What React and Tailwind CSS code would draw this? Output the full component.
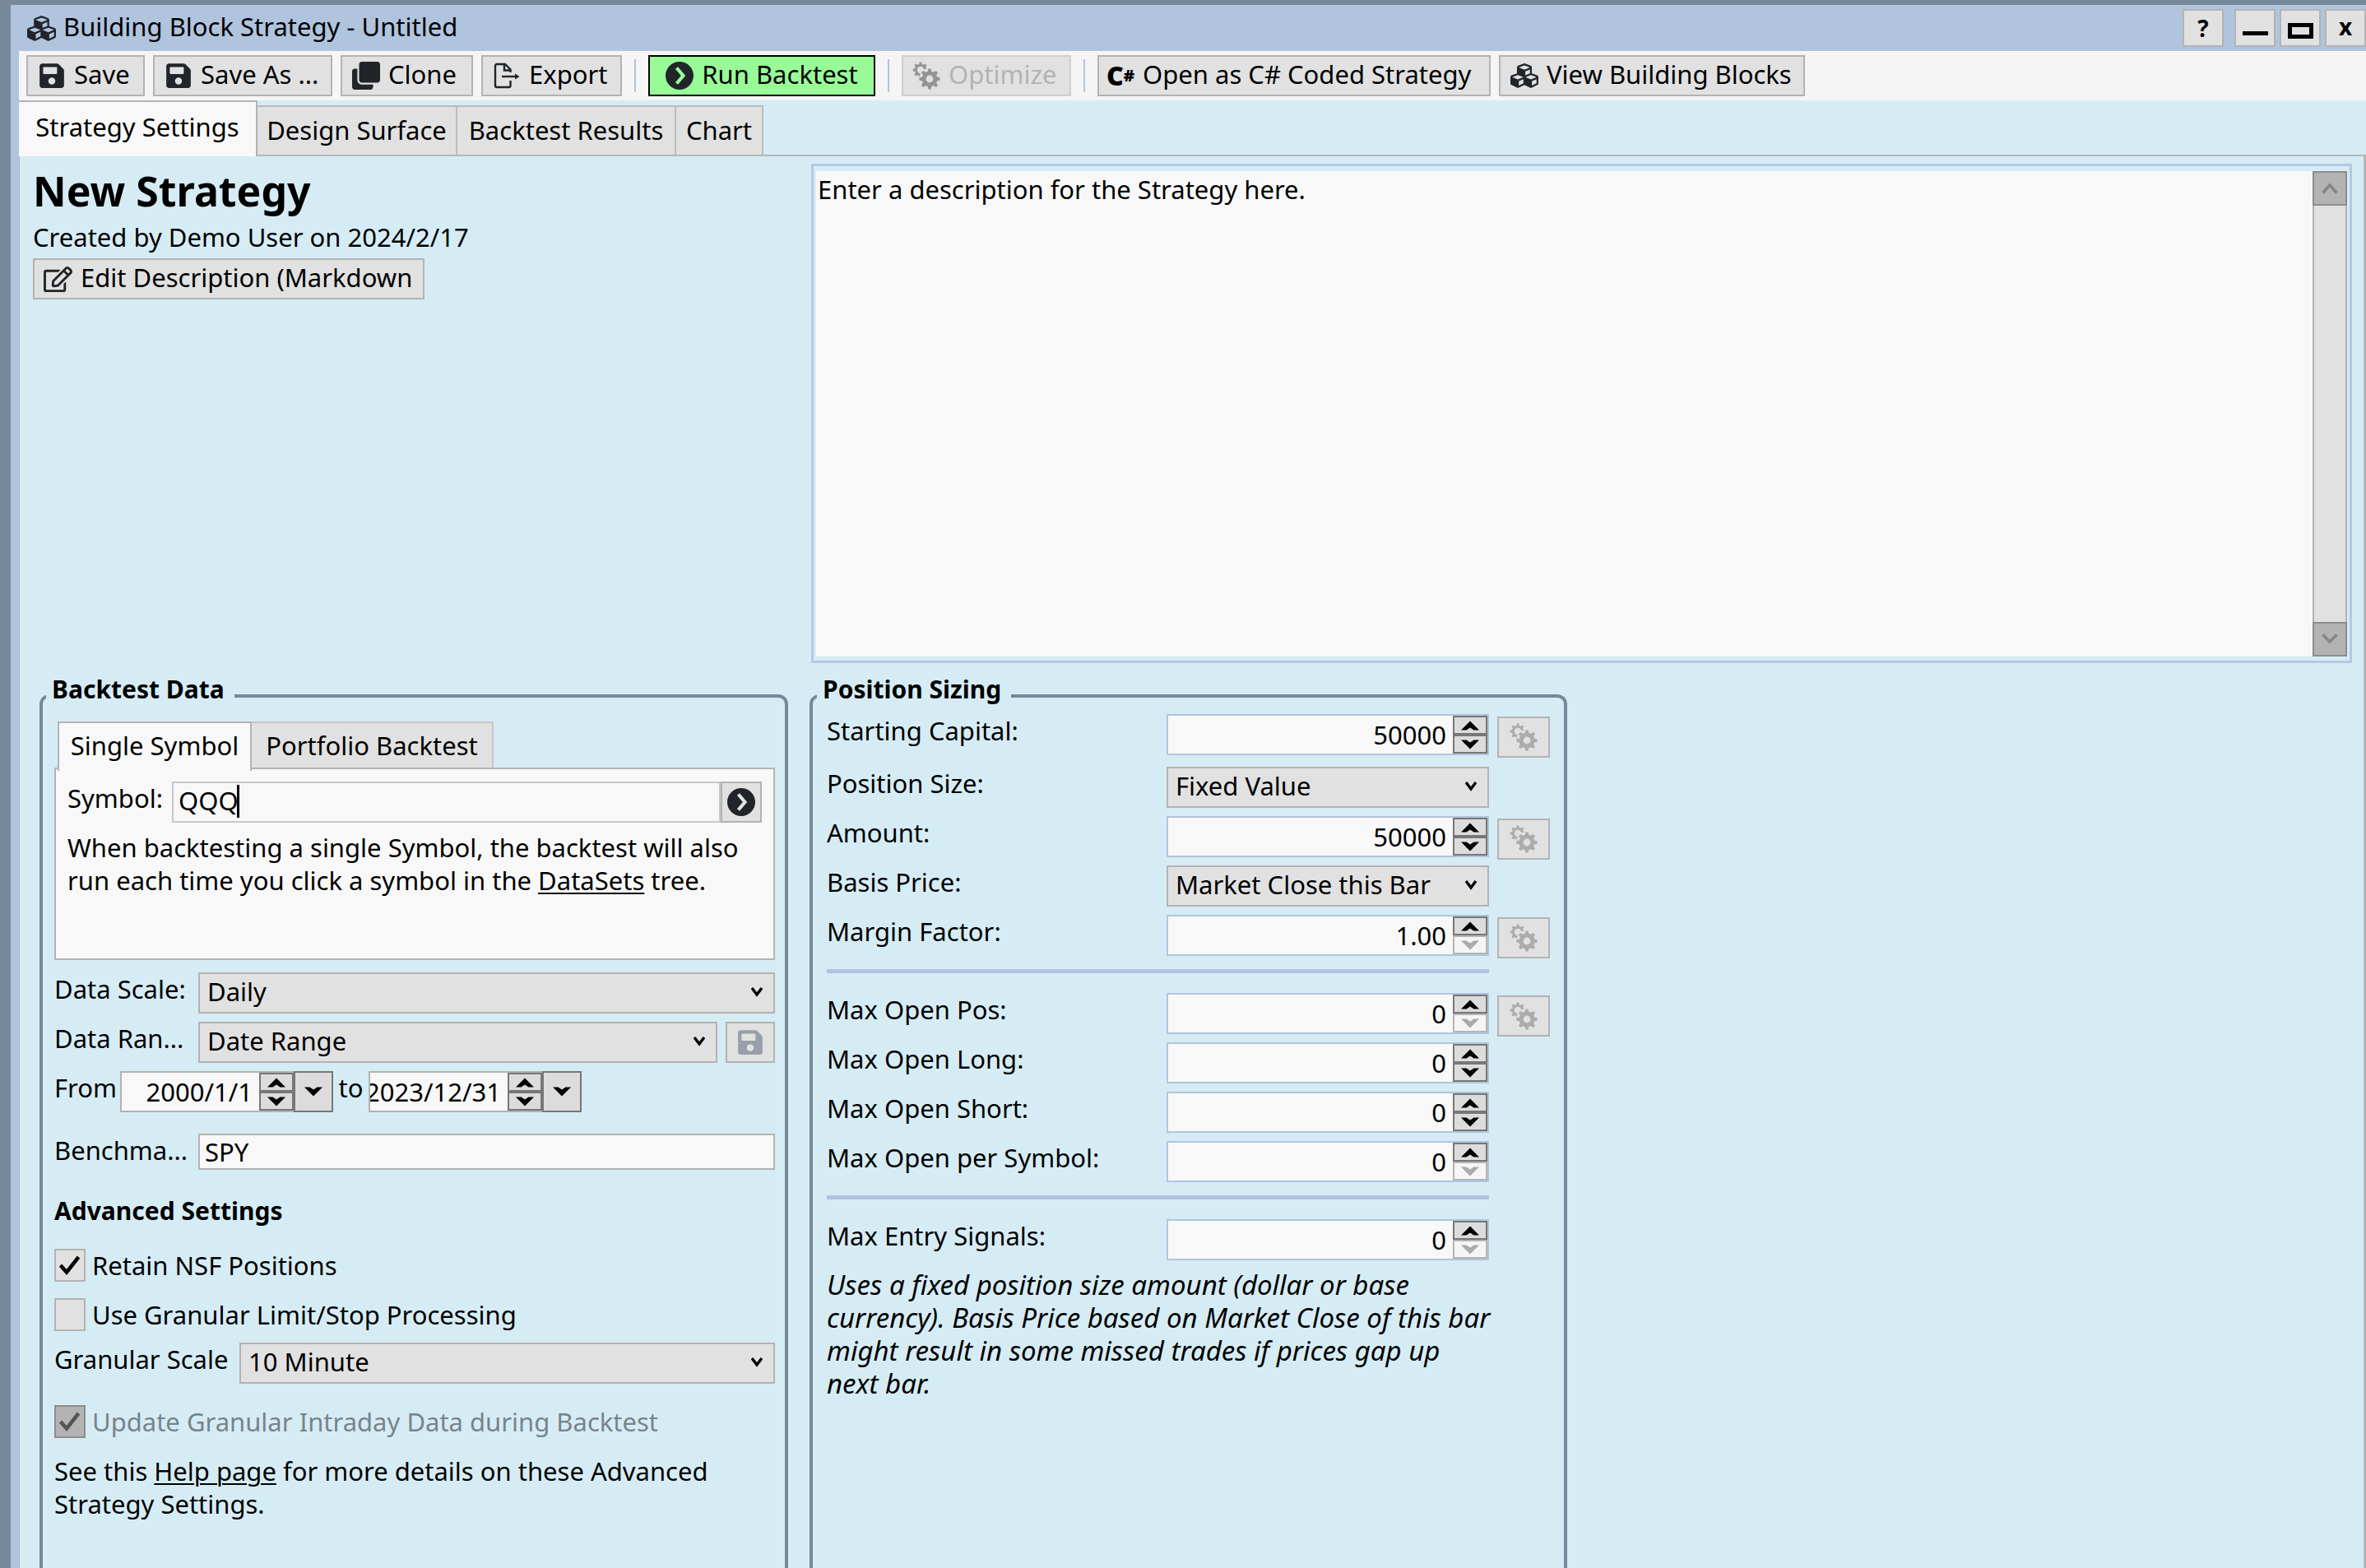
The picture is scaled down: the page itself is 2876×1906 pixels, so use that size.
import React from "react";
import { FaCubes, FaSave, FaClone, FaRegEdit } from "react-icons/fa";

/* ---------- Icons ---------- */

// Outline of a gear: each tooth is a flat top between two root points
function gearPath(cx, cy, outer, root, teeth) {
  const points = [];
  const step = (Math.PI * 2) / teeth;
  for (let i = 0; i < teeth; i++) {
    const a = i * step - Math.PI / 2;
    [[-0.3, root], [-0.17, outer], [0.17, outer], [0.3, root]].forEach(([offset, r]) => {
      const t = a + offset * step;
      points.push(`${(cx + r * Math.cos(t)).toFixed(2)} ${(cy + r * Math.sin(t)).toFixed(2)}`);
    });
  }
  return `M${points.join("L")}Z`;
}

function circlePath(cx, cy, r) {
  return `M${cx - r} ${cy}a${r} ${r} 0 1 0 ${r * 2} 0a${r} ${r} 0 1 0 ${-r * 2} 0Z`;
}

function GearsIcon({ className }) {
  return (
    <svg viewBox="0 0 34 34" fill="currentColor" fillRule="evenodd" className={className}>
      <mask id="gear-cut">
        <rect width="34" height="34" fill="#fff" />
        <circle cx="21" cy="21" r="12.500" fill="#000" />
        <path d="M10 10 L20 8 V20 H9 Z" fill="#000" />
      </mask>
      <path mask="url(#gear-cut)" d={gearPath(10, 10, 9.5, 7.2, 8) + circlePath(10, 10, 4.2)} />
      <path d={gearPath(21, 21, 12.7, 9.6, 8) + circlePath(21, 21, 4.4)} />
    </svg>
  );
}

function ExportIcon({ className }) {
  return (
    <svg viewBox="0 0 34 34" fill="none" stroke="currentColor" strokeWidth="2.4" className={className}>
      <path d="M21.500 13 V9.500 L15 3 H5 Q3 3 3 5 V29 Q3 31 5 31 H19.500 Q21.500 31 21.500 29 V23" />
      <path d="M14 3 V10.500 H21.500" />
      <path d="M11 18 H30" />
      <path d="M27 14.500 L32.500 18 L27 21.500 Z" fill="currentColor" stroke="none" />
    </svg>
  );
}

function RunIcon({ className }) {
  return (
    <svg viewBox="0 0 34 34" fill="none" className={className}>
      <circle cx="17" cy="17" r="17" fill="#212529" />
      <path d="M13.500 7.500 L21.500 17 L13.500 26.500" className="stroke-(--chevron)" strokeWidth="4.200" />
    </svg>
  );
}

function Caret({ up, className }) {
  return (
    <svg viewBox="0 0 22 12" fill="currentColor" className={className}>
      <path d={up ? "M0 11.500 L11 0.500 L22 11.500 H15.500 L11 8.500 L6.500 11.500 Z" : "M0 0.500 L11 11.500 L22 0.500 H15.500 L11 3.500 L6.500 0.500 Z"} />
    </svg>
  );
}

function ScrollArrow({ up }) {
  return (
    <svg viewBox="0 0 20 14" fill="none" stroke="#858585" strokeWidth="3.500" className="w-5 h-3.5">
      <path d={up ? "M1.500 12.500 L10 3 L18.500 12.500" : "M1.500 1.500 L10 10 L18.500 1.500"} />
    </svg>
  );
}

/* ---------- Controls ---------- */

function ToolButton({ icon, children, className, disabled }) {
  return (
    <button
      disabled={disabled}
      className={`h-[50px] border-2 flex items-center gap-2.5 whitespace-nowrap shrink-0 ${className}`}
    >
      {icon}
      <span className="pb-1">{children}</span>
    </button>
  );
}

function Separator() {
  return <div className="w-0.5 h-10 mx-[5px] bg-[#b0c4de]" />;
}

function Select({ id, options, className }) {
  return (
    <div className={`relative ${className}`}>
      <select
        id={id}
        className="appearance-none w-full h-[50px] pl-[9px] pr-10 pb-1 bg-[#e1e1e1] border-2 border-[#b3b3b3]"
      >
        {options.map((option) => (
          <option key={option}>{option}</option>
        ))}
      </select>
      <svg
        viewBox="0 0 14 12"
        fill="none"
        stroke="#000"
        strokeWidth="3.400"
        className="absolute right-[15px] top-[18px] w-3.5 h-3 pointer-events-none"
      >
        <path d="M1 1 L7 9 L13 1" />
      </svg>
    </div>
  );
}

function Spinner({ name, downDisabled }) {
  return (
    <div className="w-[42px] h-[46px] shrink-0 flex flex-col">
      <button
        aria-label={`Increase ${name}`}
        className="flex-1 flex items-center justify-center bg-[#dcdcdc] border-2 border-[#777]"
      >
        <Caret up className="w-[22px] h-3" />
      </button>
      <button
        aria-label={`Decrease ${name}`}
        disabled={downDisabled}
        className="flex-1 flex items-center justify-center border-2 bg-[#dcdcdc] border-[#777] disabled:bg-[#f5f5f5] disabled:border-[#b5b5b5] disabled:text-[#aaa]"
      >
        <Caret className="w-[22px] h-3" />
      </button>
    </div>
  );
}

function NumberRow({ id, label, value, downDisabled, gear }) {
  return (
    <div className="flex">
      <label htmlFor={id} className="w-[413px] shrink-0">{label}</label>
      <div className="w-[392px] h-[50px] flex bg-[#f8f8f8] border-2 border-[#b0c4de]">
        <input id={id} defaultValue={value} className="flex-1 min-w-0 px-2 text-right outline-none" />
        <Spinner name={label} downDisabled={downDisabled} />
      </div>
      {gear && (
        <button
          disabled
          aria-label={`Optimize ${label}`}
          className="w-16 h-[50px] ml-2.5 mt-[3px] -mb-[3px] flex items-center justify-center bg-[#e1e1e1] border-2 border-[#b3b3b3] text-[#acacac]"
        >
          <GearsIcon className="size-[34px]" />
        </button>
      )}
    </div>
  );
}

function SelectRow({ id, label, options }) {
  return (
    <div className="flex">
      <label htmlFor={id} className="w-[413px] shrink-0">{label}</label>
      <Select id={id} options={options} className="w-[392px]" />
    </div>
  );
}

function DateBox({ id, name, value }) {
  return (
    <div className="w-[259px] h-[50px] flex shrink-0">
      <div className="flex-1 min-w-0 flex bg-[#f8f8f8] border-2 border-r-0 border-[#b3b3b3]">
        <input id={id} aria-label={name} dir="rtl" defaultValue={value} className="flex-1 min-w-0 ps-2 outline-none" />
        <Spinner name={name} />
      </div>
      <button
        aria-label={`Pick ${name}`}
        className="w-12 flex items-center justify-center bg-[#dcdcdc] border-2 border-[#777]"
      >
        <Caret className="w-[22px] h-3" />
      </button>
    </div>
  );
}

function Check({ id, label, checked, disabled, className }) {
  return (
    <div className={`flex gap-2 ${className}`}>
      <div className="relative w-[38px] h-10">
        <input
          id={id}
          type="checkbox"
          defaultChecked={checked}
          disabled={disabled}
          className="block appearance-none w-[38px] h-10 bg-[#e1e1e1] border-2 border-[#b3b3b3] disabled:bg-[#b3b3b3] disabled:border-[#8c8c8c]"
        />
        {checked && (
          <svg
            viewBox="0 0 26 26"
            fill="none"
            stroke={disabled ? "#555" : "#000"}
            strokeWidth="4.500"
            className="absolute left-1.5 top-[7px] size-[26px] pointer-events-none"
          >
            <path d="M1.500 13 L9 21.500 L23.500 3" />
          </svg>
        )}
      </div>
      <label htmlFor={id} className={disabled ? "text-[#76848a]" : ""}>{label}</label>
    </div>
  );
}

/* ---------- Sections ---------- */

function TitleBar() {
  const button = "w-[50px] h-[46px] flex items-center justify-center bg-[#e1e1e1] border-2 border-[#b3b3b3] font-bold text-[28px]";
  return (
    <header className="h-14 pl-2.5 flex items-center bg-[#b0c4de]">
      <FaCubes className="size-[35px] mr-[9px] text-[#212529]" />
      <h1 className="flex-1 pb-1">Building Block Strategy - Untitled</h1>
      <div className="flex gap-[5px]">
        <button aria-label="Help" className={`${button} mr-2`}>?</button>
        <button aria-label="Minimize" className={button}>
          <span className="w-[31px] h-[5px] mt-3 bg-black" />
        </button>
        <button aria-label="Maximize" className={button}>
          <span className="w-[31px] h-[19px] mt-1.5 border-[5px] border-black" />
        </button>
        <button aria-label="Close" className={button}>
          <span className="pb-1">x</span>
        </button>
      </div>
    </header>
  );
}

function Toolbar() {
  const normal = "pl-3 bg-[#e1e1e1] border-[#b3b3b3]";
  const icon = "size-[34px] text-[#212529]";
  return (
    <nav className="h-[60px] pl-[9px] flex items-center gap-2.5 bg-[#f5f5f5]">
      <ToolButton className={`${normal} w-[144px]`} icon={<FaSave className={icon} />}>Save</ToolButton>
      <ToolButton className={`${normal} w-[218px]`} icon={<FaSave className={icon} />}>Save As ...</ToolButton>
      <ToolButton className={`${normal} w-[161px]`} icon={<FaClone className={icon} />}>Clone</ToolButton>
      <ToolButton className={`${normal} w-[171px]`} icon={<ExportIcon className={icon} />}>Export</ToolButton>
      <Separator />
      <ToolButton
        className="w-[276px] justify-center bg-[#98fb98] border-black"
        icon={<RunIcon className="size-[34px] [--chevron:#98fb98]" />}
      >
        Run Backtest
      </ToolButton>
      <Separator />
      <ToolButton
        disabled
        className="pl-[11px] w-[206px] bg-[#e1e1e1] border-[#cfcfcf] text-[#b3b3b3]"
        icon={<GearsIcon className="size-[34px] text-[#949494]" />}
      >
        Optimize
      </ToolButton>
      <Separator />
      <ToolButton
        className="pl-[9px] w-[478px] bg-[#e1e1e1] border-[#b3b3b3]"
        icon={
          <span className="flex items-center font-black text-[32px] leading-none">
            C<span className="text-[20px]">#</span>
          </span>
        }
      >
        Open as C# Coded Strategy
      </ToolButton>
      <ToolButton className={`${normal} w-[372px]`} icon={<FaCubes className={icon} />}>View Building Blocks</ToolButton>
    </nav>
  );
}

function Tabs() {
  const tab = "h-[60px] pb-0.5 bg-[#e1e1e1] border-t-2 border-r-2 border-[#b8bcbc]";
  return (
    <div className="h-[68px] flex items-end border-b-2 border-[#b3b8b8]">
      <button className="w-[290px] h-[68px] -mb-0.5 pb-1.5 bg-[#f8f8f8] border-t-2 border-r-2 border-[#b3b3b3]">
        Strategy Settings
      </button>
      <button className={`${tab} w-[243px]`}>Design Surface</button>
      <button className={`${tab} w-[266px]`}>Backtest Results</button>
      <button className={`${tab} w-[106px]`}>Chart</button>
    </div>
  );
}

function Description() {
  return (
    <section className="flex pl-4 pr-3.5 pt-[9px]">
      <div className="w-[946px] shrink-0 pt-[3px]">
        <h2 className="font-bold text-[50px] leading-[60px]">New Strategy</h2>
        <p className="mt-1.5">Created by Demo User on 2024/2/17</p>
        <ToolButton
          className="w-[476px] mt-1.5 pl-[11px] bg-[#e1e1e1] border-[#b3b3b3]"
          icon={<FaRegEdit className="size-[35px] text-[#212529]" />}
        >
          Edit Description (Markdown
        </ToolButton>
      </div>
      <div className="flex-1 h-[607px] flex px-[3px] pt-1.5 pb-[5px] border-[3px] border-[#b4c8e2]">
        <p className="flex-1 px-0.5 pt-0.5 bg-[#f8f8f8]">Enter a description for the Strategy here.</p>
        <div className="w-[42px] flex flex-col justify-between bg-[#e1e1e1] border-x-2 border-[#b3b3b3]">
          <button aria-label="Scroll up" className="-mx-0.5 h-[42px] flex items-center justify-center bg-[#b3b3b3] border-2 border-[#8c8c8c]">
            <ScrollArrow up />
          </button>
          <button aria-label="Scroll down" className="-mx-0.5 h-[42px] flex items-center justify-center bg-[#b3b3b3] border-2 border-[#8c8c8c]">
            <ScrollArrow />
          </button>
        </div>
      </div>
    </section>
  );
}

function BacktestData() {
  return (
    <fieldset className="w-[910px] pl-3.5 pr-3 border-4 border-b-0 border-[#778899] rounded-t-xl">
      <legend className="-ml-2.5 pl-[7px] pr-3 pb-4 font-bold text-[30px] leading-7">Backtest Data</legend>
      <div className="pt-[9px] pl-1 flex">
        <button className="relative w-[236px] h-[60px] -mb-1 bg-[#f8f8f8] border-2 border-b-0 border-[#b3b3b3]">
          <span className="block -mt-1">Single Symbol</span>
        </button>
        <button className="w-[294px] h-14 bg-[#e1e1e1] border-2 border-b-0 border-l-0 border-[#c3c8c8]">
          Portfolio Backtest
        </button>
      </div>
      <div className="h-[234px] px-3.5 pt-[15px] bg-[#f8f8f8] border-2 border-[#b3b3b3]">
        <div className="flex">
          <label htmlFor="symbol" className="w-[127px] shrink-0">Symbol:</label>
          <div className="relative flex-1">
            <input
              id="symbol"
              defaultValue="QQQ"
              className="w-full h-[50px] px-1.5 pb-1 border-2 border-[#c8c8c8] outline-none"
            />
            <span className="absolute left-[79px] top-1 w-[3px] h-10 bg-black" />
          </div>
          <button aria-label="Go" className="w-[50px] h-[50px] flex items-center justify-center bg-[#e1e1e1] border-2 border-[#b3b3b3]">
            <RunIcon className="size-[34px] [--chevron:#e1e1e1]" />
          </button>
        </div>
        <p className="mt-2.5 whitespace-nowrap">
          When backtesting a single Symbol, the backtest will also
          <br />
          run each time you click a symbol in the{" "}
          <a href="#datasets" className="underline decoration-2 underline-offset-3">DataSets</a> tree.
        </p>
      </div>

      <div className="flex mt-[15px]">
        <label htmlFor="scale" className="w-[175px] shrink-0">Data Scale:</label>
        <Select id="scale" options={["Daily"]} className="flex-1" />
      </div>
      <div className="flex mt-2.5">
        <label htmlFor="range" className="w-[175px] shrink-0">Data Ran...</label>
        <Select id="range" options={["Date Range"]} className="flex-1" />
        <button
          disabled
          aria-label="Save range"
          className="w-[60px] h-[50px] ml-2.5 flex items-center justify-center bg-[#e1e1e1] border-2 border-[#b3b3b3] text-[#97a0aa]"
        >
          <FaSave className="size-[34px]" />
        </button>
      </div>
      <div className="flex mt-2.5">
        <label htmlFor="from" className="w-20 shrink-0">From</label>
        <DateBox id="from" name="From date" value="2000/1/1" />
        <label htmlFor="to" className="w-[43px] text-center">to</label>
        <DateBox id="to" name="To date" value="2023/12/31" />
      </div>
      <div className="flex mt-[26px]">
        <label htmlFor="benchmark" className="w-[175px] shrink-0">Benchma...</label>
        <input
          id="benchmark"
          defaultValue="SPY"
          className="flex-1 min-w-0 h-11 px-1.5 bg-[#f8f8f8] border-2 border-[#b3b3b3] outline-none"
        />
      </div>

      <h3 className="mt-[30px] font-bold text-[30px]">Advanced Settings</h3>
      <Check id="nsf" label="Retain NSF Positions" checked className="mt-[26px]" />
      <Check id="granular" label="Use Granular Limit/Stop Processing" className="mt-5" />
      <div className="flex mt-3.5">
        <label htmlFor="granular-scale" className="w-[225px] shrink-0">Granular Scale</label>
        <Select id="granular-scale" options={["10 Minute"]} className="flex-1" />
      </div>
      <Check id="intraday" label="Update Granular Intraday Data during Backtest" checked disabled className="mt-[26px]" />
      <p className="mt-5 whitespace-nowrap">
        See this <a href="#help" className="underline decoration-2 underline-offset-3">Help page</a> for more details on these Advanced
        <br />
        Strategy Settings.
      </p>
    </fieldset>
  );
}

function PositionSizing() {
  return (
    <fieldset className="w-[921px] px-[17px] border-4 border-b-0 border-[#778899] rounded-t-xl">
      <legend className="-ml-3 pl-[7px] pr-3 pb-4 font-bold text-[30px] leading-7">Position Sizing</legend>
      <div className="flex flex-col gap-2.5">
        <div className="mb-1">
          <NumberRow id="capital" label="Starting Capital:" value="50000" gear />
        </div>
        <SelectRow id="size" label="Position Size:" options={["Fixed Value"]} />
        <NumberRow id="amount" label="Amount:" value="50000" gear />
        <SelectRow id="basis" label="Basis Price:" options={["Market Close this Bar"]} />
        <NumberRow id="margin" label="Margin Factor:" value="1.00" downDisabled gear />
        <div className="w-[805px] h-[5px] mt-1.5 mb-3.5 bg-[#b0c4de]" />
        <NumberRow id="max-pos" label="Max Open Pos:" value="0" downDisabled gear />
        <NumberRow id="max-long" label="Max Open Long:" value="0" />
        <NumberRow id="max-short" label="Max Open Short:" value="0" />
        <NumberRow id="max-symbol" label="Max Open per Symbol:" value="0" downDisabled />
        <div className="w-[805px] h-[5px] mt-1.5 mb-3.5 bg-[#b0c4de]" />
        <NumberRow id="max-signals" label="Max Entry Signals:" value="0" downDisabled />
        <p className="italic text-[33px] whitespace-nowrap">
          Uses a fixed position size amount (dollar or base
          <br />
          currency). Basis Price based on Market Close of this bar
          <br />
          might result in some missed trades if prices gap up
          <br />
          next bar.
        </p>
      </div>
    </fieldset>
  );
}

export default function App() {
  return (
    <div className="min-h-screen flex bg-[#778899] font-['Noto_Sans',sans-serif] text-[31px] leading-10 text-black">
      <div className="flex-1 min-w-0 flex flex-col mt-1.5 ml-[13px] border-l-10 border-[#b0c4de] bg-[#d6ecf5]">
        <TitleBar />
        <Toolbar />
        <Tabs />
        <main className="flex-1 flex flex-col border-l border-r-[3px] border-[#b3b8b8]">
          <Description />
          {/* Group boxes run off the bottom of the window */}
          <div className="flex-1 flex gap-[26px] mt-[18px] pl-6">
            <BacktestData />
            <PositionSizing />
          </div>
        </main>
      </div>
    </div>
  );
}
